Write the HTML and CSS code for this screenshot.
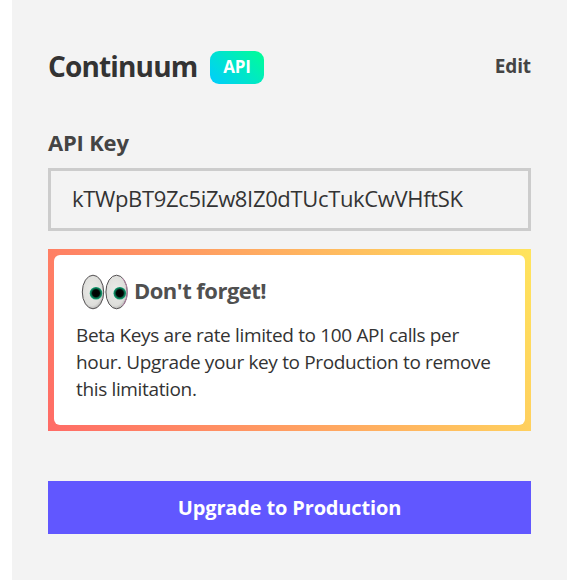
FILE: index.html
```
<!DOCTYPE html>
<html lang="en">
<head>
<meta charset="utf-8">
<title>Continuum</title>
<link rel="stylesheet" href="styles.css">
</head>
<body>
<main class="panel">
  <header class="header">
    <h1 class="title">Continuum</h1>
    <span class="badge">API</span>
    <a class="edit">Edit</a>
  </header>
  <h2 class="label">API Key</h2>
  <div class="key">kTWpBT9Zc5iZw8IZ0dTUcTukCwVHftSK</div>
  <section class="callout">
    <div class="callout-body">
      <div class="callout-head">
        <svg class="eyes" viewBox="0 0 48 36" width="48" height="36">
          <defs>
            <radialGradient id="white" cx="45%" cy="45%" r="60%">
              <stop offset="0" stop-color="#ebebe8"/>
              <stop offset=".75" stop-color="#dededb"/>
              <stop offset="1" stop-color="#aaa9a8"/>
            </radialGradient>
            <radialGradient id="iris">
              <stop offset="0" stop-color="#000"/>
              <stop offset=".55" stop-color="#020705"/>
              <stop offset=".75" stop-color="#07694a"/>
              <stop offset="1" stop-color="#18a878"/>
            </radialGradient>
          </defs>
          <ellipse cx="12" cy="18" rx="10.7" ry="16.8" fill="url(#white)" stroke="#555254"/>
          <ellipse cx="35.6" cy="18" rx="10.7" ry="16.8" fill="url(#white)" stroke="#555254"/>
          <path d="M41.5 4.2Q46.3 10 46.3 18T41.5 31.8" fill="none" stroke="#bd86ad" stroke-width=".9"/>
          <circle cx="15" cy="19.2" r="6.3" fill="url(#iris)"/>
          <circle cx="38.8" cy="19.2" r="6.3" fill="url(#iris)"/>
        </svg>
        <h3 class="callout-title">Don't forget!</h3>
      </div>
      <p class="text">Beta Keys are rate limited to 100 API calls per<br>hour. Upgrade your key to Production to remove<br>this limitation.</p>
    </div>
  </section>
  <button class="upgrade">Upgrade to Production</button>
</main>
</body>
</html>
```
FILE: styles.css
```
* { box-sizing: border-box; margin: 0; padding: 0; }
body {
  width: 568px;
  height: 580px;
  overflow: hidden;
  background: #fff;
  color: #333;
  font-family: "Open Sans", "Noto Sans", sans-serif;
  white-space: nowrap;
}
.panel {
  width: 555px;
  height: 580px;
  margin-left: 12px;
  padding: 51px 36px 0;
  background: #f3f3f3;
}
.header { display: flex; align-items: center; height: 33px; }
.title {
  width: 162px;
  font-size: 28px;
  line-height: 31px;
  height: 33px;
  font-weight: 700;
  letter-spacing: -0.85px;
}
.badge {
  width: 54px;
  height: 33px;
  border-radius: 9px;
  background: linear-gradient(45deg, #00ccff, #00ff94);
  color: #fff;
  font-size: 17px;
  font-weight: 700;
  line-height: 32px;
  text-align: center;
  letter-spacing: -0.2px;
}
.edit { height: 33px; margin-left: auto; font-size: 19px; font-weight: 700; line-height: 31px; letter-spacing: -0.1px; color: #444; }
.label { margin-top: 42px; height: 42px; font-size: 22px; line-height: 32px; font-weight: 700; letter-spacing: -0.2px; color: #444; }
.key {
  height: 63px;
  padding-left: 21px;
  border: 3px solid #ccc;
  font-size: 22px;
  line-height: 55px;
  letter-spacing: -0.34px;
}
.callout {
  height: 182px;
  margin-top: 18px;
  padding: 6px;
  background: linear-gradient(62deg, #ff6b66, #ffe45c);
}
.callout-body { height: 170px; padding: 19px 22px 0; border-radius: 6px; background: #fff; }
.callout-head { display: flex; align-items: center; height: 36px; padding-left: 5px; }
.eyes { flex: none; }
.callout-title { height: 36px; margin-left: 5px; font-size: 22px; line-height: 33px; font-weight: 700; letter-spacing: -0.52px; color: #505050; }
.text { margin-top: 12px; font-size: 19px; line-height: 27px; letter-spacing: -0.35px; }
.upgrade {
  display: block;
  width: 483px;
  height: 53px;
  margin-top: 50px;
  border: 0;
  padding-bottom: 1px;
  background: #6157ff;
  color: #fff;
  font: 700 20px/51px "Open Sans", "Noto Sans", sans-serif;
  letter-spacing: -0.15px;
}
```
